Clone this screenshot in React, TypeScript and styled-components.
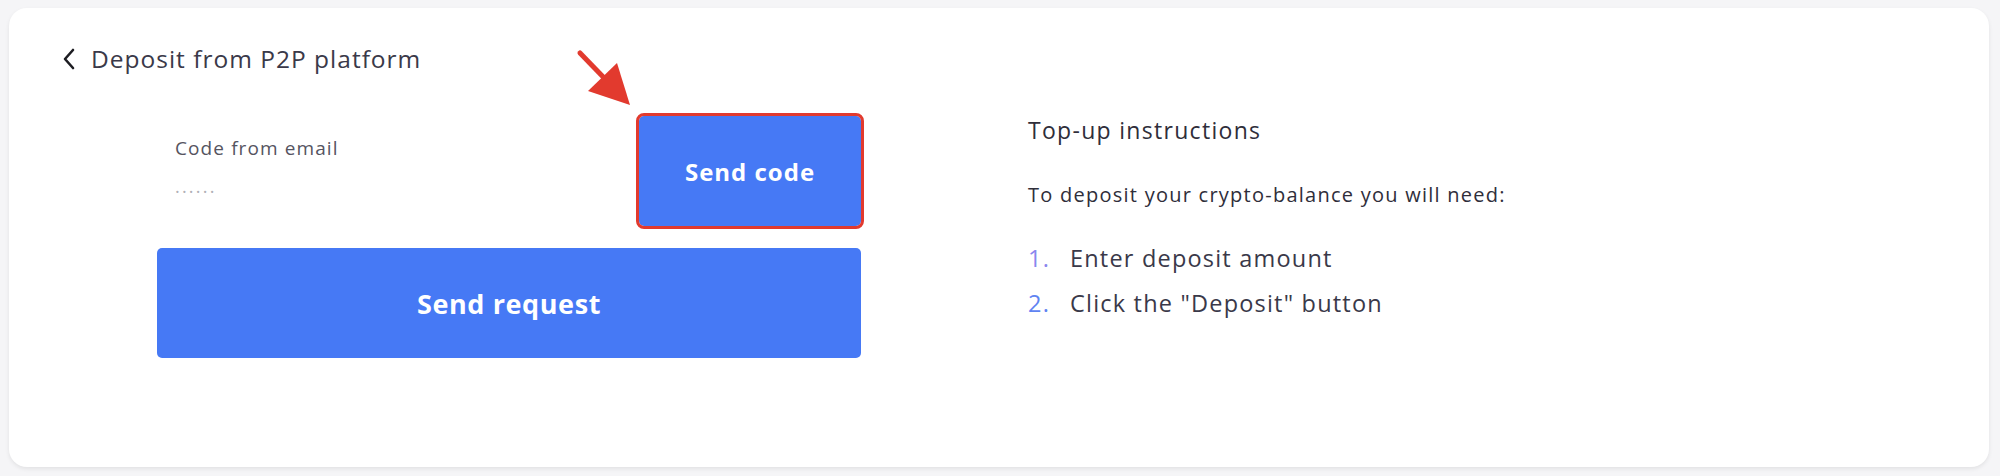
import React from "react";
import styled, { createGlobalStyle } from "styled-components";

const Global = createGlobalStyle`
  html, body { margin: 0; padding: 0; background: #f5f5f7; }
  body { font-family: "Open Sans", "Noto Sans", sans-serif; }
  * { box-sizing: border-box; }
`;

const Page = styled.div`
  padding: 8px 11px 9px 9px;
  height: 476px;
`;

const Card = styled.section`
  background: #ffffff;
  border-radius: 18px;
  box-shadow: 0 2px 4px rgba(0, 0, 0, 0.08);
  height: 459px;
  padding: 39px 52px 0 53px;
`;

const Header = styled.div`
  display: flex;
  align-items: center;
  gap: 16px;
  height: 24px;
`;

const BackButton = styled.button`
  border: none;
  background: none;
  padding: 0;
  display: flex;
  align-items: center;
  cursor: pointer;
`;

const Title = styled.h1`
  margin: 0;
  font-size: 24.5px;
  line-height: 24px;
  letter-spacing: 1px;
  font-weight: 500;
  color: #3a3949;
`;

const Body = styled.div`
  display: flex;
  margin-top: 45px;
  padding-left: 95px;
`;

const FormColumn = styled.div`
  width: 704px;
  display: flex;
  flex-direction: column;
  gap: 22px;
`;

const CodeRow = styled.div`
  display: flex;
  align-items: flex-start;
`;

const Field = styled.label`
  flex: 1;
  display: flex;
  flex-direction: column;
  padding: 21px 0 0 18px;
`;

const FieldLabel = styled.span`
  font-size: 19px;
  line-height: 22px;
  letter-spacing: 1.1px;
  color: #55545f;
`;

const CodeInput = styled.input`
  margin-top: 21px;
  border: none;
  outline: none;
  padding: 0;
  width: 200px;
  font-family: inherit;
  font-size: 18px;
  line-height: 22px;
  letter-spacing: 2.2px;
  background: transparent;
  &::placeholder { color: #b0b0b6; }
`;

const Button = styled.button<{ $w?: number; $h: number; $fs: number; $ls: number; $highlight?: boolean }>`
  position: relative;
  width: ${(p) => (p.$w ? `${p.$w}px` : "100%")};
  height: ${(p) => p.$h}px;
  border: none;
  border-radius: 5px;
  background: #4679f5;
  color: #ffffff;
  font-family: inherit;
  font-weight: 700;
  font-size: ${(p) => p.$fs}px;
  letter-spacing: ${(p) => p.$ls}px;
  cursor: pointer;
  ${(p) => (p.$highlight ? "outline: 3px solid #e23a2e; outline-offset: 0;" : "")}
`;

const ArrowMark = styled.svg`
  position: absolute;
  left: -65px;
  top: -69px;
  width: 60px;
  height: 60px;
  overflow: visible;
`;

const InfoColumn = styled.div`
  margin-left: 167px;
  padding-top: 1px;
  color: #2f2e3a;
`;

const InfoTitle = styled.h2`
  margin: 0;
  font-size: 23px;
  line-height: 26px;
  letter-spacing: 1.3px;
  font-weight: 500;
`;

const InfoText = styled.p`
  margin: 40px 0 0;
  font-size: 20px;
  line-height: 24px;
  letter-spacing: 1.25px;
  font-weight: 500;
`;

const Steps = styled.ol`
  list-style: none;
  margin: 29px 0 0;
  padding: 0;
`;

const Step = styled.li`
  display: flex;
  font-size: 23.5px;
  line-height: 45px;
  letter-spacing: 1.2px;
  color: #3a3949;
`;

const StepNum = styled.span<{ $color: string }>`
  width: 22px;
  text-align: right;
  margin-right: 20px;
  color: ${(p) => p.$color};
`;

export default function App() {
  return (
    <>
      <Global />
      <Page>
        <Card>
          <Header>
            <BackButton aria-label="Back">
              <svg width="13" height="22" viewBox="0 0 13 22">
                <path d="M11 2 L3 11 L11 20" fill="none" stroke="#1d1d22" strokeWidth="2.6" strokeLinecap="round" strokeLinejoin="round" />
              </svg>
            </BackButton>
            <Title>Deposit from P2P platform</Title>
          </Header>
          <Body>
            <FormColumn>
              <CodeRow>
                <Field>
                  <FieldLabel>Code from email</FieldLabel>
                  <CodeInput placeholder="······" />
                </Field>
                <Button $w={222} $h={110} $fs={24} $ls={1} $highlight>
                  <ArrowMark viewBox="0 0 60 60">
                    <line x1="6" y1="6" x2="36" y2="37" stroke="#e23a2e" strokeWidth="5" strokeLinecap="round" />
                    <polygon points="56,58 14,44 43,16" fill="#e23a2e" />
                  </ArrowMark>
                  Send code
                </Button>
              </CodeRow>
              <Button $h={110} $fs={27} $ls={0.6}>Send request</Button>
            </FormColumn>
            <InfoColumn>
              <InfoTitle>Top-up instructions</InfoTitle>
              <InfoText>To deposit your crypto-balance you will need:</InfoText>
              <Steps>
                <Step><StepNum $color="#8a86ee">1.</StepNum>Enter deposit amount</Step>
                <Step><StepNum $color="#5f84f2">2.</StepNum>Click the "Deposit" button</Step>
              </Steps>
            </InfoColumn>
          </Body>
        </Card>
      </Page>
    </>
  );
}
